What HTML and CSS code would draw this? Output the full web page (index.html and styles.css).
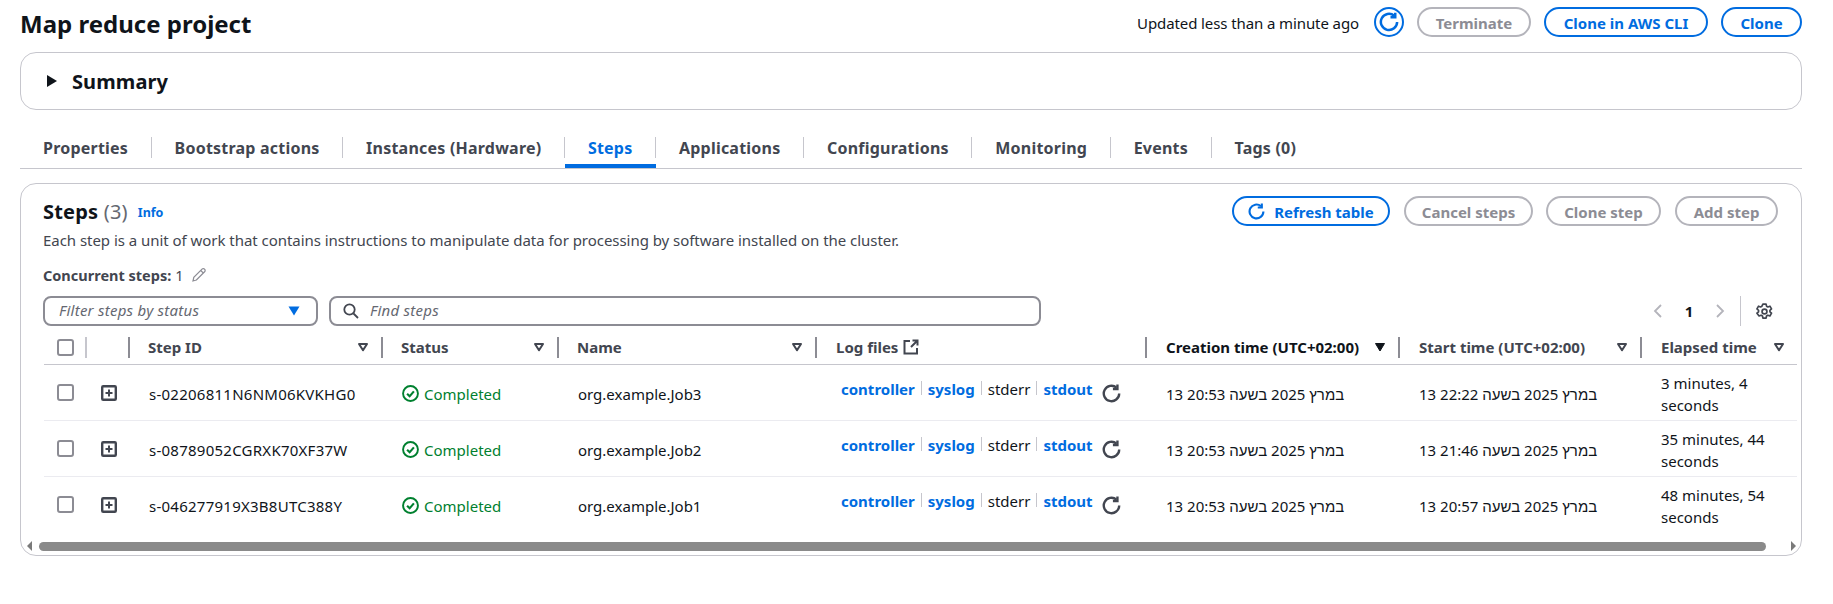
FILE: index.html
```html
<!DOCTYPE html>
<html lang="en">
<head>
<meta charset="utf-8">
<title>Map reduce project</title>
<link rel="stylesheet" href="styles.css">
</head>
<body>
<svg class="defs" width="0" height="0" aria-hidden="true">
  <symbol id="i-refresh" viewBox="0 0 16 16"><path d="M14.500 8a6.500 6.500 0 1 1-2.300-5" fill="none" stroke="currentColor" stroke-width="2"/><path d="M13 0.500V4.200H9.200" fill="none" stroke="currentColor" stroke-width="2"/></symbol>
  <symbol id="i-sort" viewBox="0 0 12 10"><path d="M2 2h8L6 8.200z" fill="none" stroke="currentColor" stroke-width="2" stroke-linejoin="round"/></symbol>
  <symbol id="i-sort-on" viewBox="0 0 12 10"><path d="M1.500 1.500h9L6 9z" fill="currentColor" stroke="currentColor" stroke-width="1" stroke-linejoin="round"/></symbol>
  <symbol id="i-expand" viewBox="0 0 16 16"><rect x="1.200" y="1.200" width="13.600" height="13.600" rx="1" fill="none" stroke="currentColor" stroke-width="2.400"/><path d="M8 4.500v7M4.500 8h7" fill="none" stroke="currentColor" stroke-width="2"/></symbol>
  <symbol id="i-check" viewBox="0 0 16 16"><circle cx="8" cy="8" r="7" fill="none" stroke="currentColor" stroke-width="1.800"/><path d="M4.800 8.200l2.400 2.400 4-4.600" fill="none" stroke="currentColor" stroke-width="2"/></symbol>
</svg>

<header class="page-head">
  <h1 class="page-title">Map reduce project</h1>
  <div class="page-actions">
    <span class="updated">Updated less than a minute ago</span>
    <button class="icon-btn"><svg class="icon-20"><use href="#i-refresh"/></svg></button>
    <button class="btn btn-off btn-terminate">Terminate</button>
    <button class="btn btn-on btn-cli">Clone in AWS CLI</button>
    <button class="btn btn-on btn-clone">Clone</button>
  </div>
</header>

<section class="summary">
  <svg class="summary-caret" viewBox="0 0 12 14"><path d="M1 1l10 6-10 6z" fill="currentColor"/></svg>
  <h2 class="summary-title">Summary</h2>
</section>

<nav class="tabs">
  <a class="tab"><span class="tab-label">Properties</span></a>
  <a class="tab"><span class="tab-label">Bootstrap actions</span></a>
  <a class="tab"><span class="tab-label">Instances (Hardware)</span></a>
  <a class="tab tab-active"><span class="tab-label">Steps</span></a>
  <a class="tab"><span class="tab-label">Applications</span></a>
  <a class="tab"><span class="tab-label">Configurations</span></a>
  <a class="tab"><span class="tab-label">Monitoring</span></a>
  <a class="tab"><span class="tab-label">Events</span></a>
  <a class="tab"><span class="tab-label tab-last">Tags (0)</span></a>
</nav>

<section class="panel">
  <div class="panel-top">
    <div class="panel-head">
      <div class="panel-heading">
        <h2 class="panel-title">Steps <span class="panel-count">(3)</span></h2>
        <a class="info">Info</a>
      </div>
      <div class="panel-actions">
        <button class="btn btn-on btn-refresh"><svg class="icon-17"><use href="#i-refresh"/></svg>Refresh table</button>
        <button class="btn btn-off btn-cancel">Cancel steps</button>
        <button class="btn btn-off btn-clonestep">Clone step</button>
        <button class="btn btn-off btn-add">Add step</button>
      </div>
    </div>
    <p class="panel-desc">Each step is a unit of work that contains instructions to manipulate data for processing by software installed on the cluster.</p>
    <p class="concurrent"><b>Concurrent steps:</b> 1
      <svg class="pencil" viewBox="0 0 16 16"><path d="M2 14l.800-3.600L11 2.200a1.800 1.800 0 0 1 2.600 0 1.800 1.800 0 0 1 0 2.600L5.400 13z M9.800 3.500l2.600 2.600" fill="none" stroke="currentColor" stroke-width="1.200"/></svg>
    </p>
    <div class="toolbar">
      <div class="filter"><span class="ph">Filter steps by status</span><svg class="filter-caret" viewBox="0 0 12 10"><path d="M.5 .5h11L6 9.500z" fill="currentColor"/></svg></div>
      <div class="search">
        <svg class="search-icon" viewBox="0 0 16 16"><circle cx="6.500" cy="6.500" r="5.200" fill="none" stroke="currentColor" stroke-width="1.800"/><path d="M10.500 10.500l4.500 4.500" fill="none" stroke="currentColor" stroke-width="1.800"/></svg>
        <span class="ph">Find steps</span>
      </div>
      <div class="pager">
        <svg class="chev" viewBox="0 0 10 16"><path d="M8 2L2 8l6 6" fill="none" stroke="currentColor" stroke-width="1.800"/></svg>
        <b class="page-num">1</b>
        <svg class="chev" viewBox="0 0 10 16"><path d="M2 2l6 6-6 6" fill="none" stroke="currentColor" stroke-width="1.800"/></svg>
        <span class="pager-sep"></span>
        <svg class="gear" viewBox="0 0 16 16"><path d="M6.500 1h3l.4 2 1.300.7 1.900-.7 1.500 2.600-1.500 1.300v1.400l1.500 1.300-1.500 2.600-1.900-.7-1.300.7-.4 2h-3l-.4-2-1.300-.7-1.900.7L.900 9.600l1.500-1.300V6.900L.900 5.600l1.500-2.600 1.900.7 1.300-.7z" fill="none" stroke="currentColor" stroke-width="1.600" stroke-linejoin="round"/><circle cx="8" cy="8" r="2.300" fill="none" stroke="currentColor" stroke-width="1.600"/></svg>
      </div>
    </div>
  </div>

  <table class="grid">
    <colgroup>
      <col class="c-sel"><col class="c-exp"><col class="c-id"><col class="c-status"><col class="c-name"><col class="c-log"><col class="c-create"><col class="c-start"><col class="c-elapsed">
    </colgroup>
    <thead>
      <tr>
        <th><div class="th th-sel"><span class="box"></span></div></th>
        <th><div class="th"></div></th>
        <th><div class="th">Step ID<svg class="sort"><use href="#i-sort"/></svg></div></th>
        <th><div class="th">Status<svg class="sort"><use href="#i-sort"/></svg></div></th>
        <th><div class="th">Name<svg class="sort"><use href="#i-sort"/></svg></div></th>
        <th><div class="th th-log th-wide">Log files<svg class="ext" viewBox="0 0 16 16"><path d="M7 2H1.500v12.500H14V9" fill="none" stroke="currentColor" stroke-width="2"/><path d="M9.500 1.500H14.500V6.500M14 2L8 8" fill="none" stroke="currentColor" stroke-width="2"/></svg></div></th>
        <th><div class="th th-on th-wide">Creation time (UTC+02:00)<svg class="sort"><use href="#i-sort-on"/></svg></div></th>
        <th><div class="th th-wide">Start time (UTC+02:00)<svg class="sort"><use href="#i-sort"/></svg></div></th>
        <th><div class="th th-end th-wide">Elapsed time<svg class="sort"><use href="#i-sort"/></svg></div></th>
      </tr>
    </thead>
    <tbody>
      <tr>
        <td class="td-sel"><span class="box"></span></td>
        <td class="td-exp"><svg class="expand"><use href="#i-expand"/></svg></td>
        <td class="td-id">s-02206811N6NM06KVKHG0</td>
        <td><span class="ok"><svg class="ok-icon"><use href="#i-check"/></svg>Completed</span></td>
        <td>org.example.Job3</td>
        <td class="td-log"><div class="logs"><a>controller</a><i></i><a>syslog</a><i></i><span>stderr</span><i></i><a>stdout</a><svg class="log-refresh"><use href="#i-refresh"/></svg></div></td>
        <td>13 במרץ 2025 בשעה 20:53</td>
        <td>13 במרץ 2025 בשעה 22:22</td>
        <td class="td-elapsed">3 minutes, 4 seconds</td>
      </tr>
      <tr>
        <td class="td-sel"><span class="box"></span></td>
        <td class="td-exp"><svg class="expand"><use href="#i-expand"/></svg></td>
        <td class="td-id">s-08789052CGRXK70XF37W</td>
        <td><span class="ok"><svg class="ok-icon"><use href="#i-check"/></svg>Completed</span></td>
        <td>org.example.Job2</td>
        <td class="td-log"><div class="logs"><a>controller</a><i></i><a>syslog</a><i></i><span>stderr</span><i></i><a>stdout</a><svg class="log-refresh"><use href="#i-refresh"/></svg></div></td>
        <td>13 במרץ 2025 בשעה 20:53</td>
        <td>13 במרץ 2025 בשעה 21:46</td>
        <td class="td-elapsed">35 minutes, 44 seconds</td>
      </tr>
      <tr class="row-last">
        <td class="td-sel"><span class="box"></span></td>
        <td class="td-exp"><svg class="expand"><use href="#i-expand"/></svg></td>
        <td class="td-id">s-046277919X3B8UTC388Y</td>
        <td><span class="ok"><svg class="ok-icon"><use href="#i-check"/></svg>Completed</span></td>
        <td>org.example.Job1</td>
        <td class="td-log"><div class="logs"><a>controller</a><i></i><a>syslog</a><i></i><span>stderr</span><i></i><a>stdout</a><svg class="log-refresh"><use href="#i-refresh"/></svg></div></td>
        <td>13 במרץ 2025 בשעה 20:53</td>
        <td>13 במרץ 2025 בשעה 20:57</td>
        <td class="td-elapsed">48 minutes, 54 seconds</td>
      </tr>
    </tbody>
  </table>

  <div class="hscroll">
    <span class="arrow arrow-l"></span>
    <span class="thumb"></span>
    <span class="arrow arrow-r"></span>
  </div>
</section>
</body>
</html>
```
FILE: styles.css
```css
* { box-sizing: border-box; }
html, body { margin: 0; padding: 0; background: #fff; }
body {
  padding: 7px 31px 0 20px;
  font-family: "Noto Sans", "Liberation Sans", "DejaVu Sans", sans-serif;
  font-size: 15px;
  line-height: 20px;
  color: #0f141a;
  overflow: hidden;
}
.defs { position: absolute; }
svg { display: block; flex: none; }
.icon-17 { width: 17px; height: 17px; }
.icon-20 { width: 20px; height: 20px; }

.page-head { display: flex; align-items: center; justify-content: space-between; height: 30px; }
.page-title { margin: 0; padding-top: 3px; font-size: 24px; line-height: 30px; font-weight: 700; }
.page-actions { display: flex; align-items: center; }
.updated { margin-right: 15px; padding-top: 2px; letter-spacing: -0.1px; }

.btn {
  display: flex; align-items: center; justify-content: center;
  height: 30px; padding: 1px 0 0; border: 2px solid; border-radius: 20px;
  background: #fff; font: 700 15px/20px "Noto Sans", "Liberation Sans", sans-serif;
}
.btn-on { color: #006ce0; border-color: #006ce0; }
.btn-off { color: #8c8c94; border-color: #b4b4bb; }
.icon-btn {
  display: flex; align-items: center; justify-content: center;
  width: 30px; height: 30px; padding: 0; margin-right: 13px;
  color: #006ce0; background: #fff; border: 2px solid #006ce0; border-radius: 50%;
}
.btn-terminate { width: 114px; margin-right: 13px; }
.btn-cli { width: 164px; margin-right: 13px; }
.btn-clone { width: 81px; }

.summary {
  display: flex; align-items: center; height: 58px; margin-top: 15px;
  padding-left: 25px; border: 1px solid #c6c6cd; border-radius: 16px;
}
.summary-caret { width: 12px; height: 14px; margin-right: 14px; }
.summary-title { margin: 0; padding-top: 2px; font-size: 20px; line-height: 24px; font-weight: 700; letter-spacing: .1px; }

.tabs { display: flex; margin-top: 27px; border-bottom: 1px solid #c6c6cd; }
.tab { display: block; padding-bottom: 6px; border-bottom: 4px solid transparent; }
.tab-label {
  display: block; height: 21px; padding: 0 22.500px 0 23px;
  border-right: 1px solid #c6c6cd;
  font-size: 16px; line-height: 23px; font-weight: 700; color: #424650; white-space: nowrap; letter-spacing: .22px;
}
.tab-last { border-right: 0; }
.tab-active { border-bottom-color: #006ce0; }
.tab-active .tab-label { color: #006ce0; }

.panel {
  width: 1782px; height: 373px; margin-top: 14px;
  border: 1px solid #c6c6cd; border-radius: 16px; padding-top: 12px; overflow: hidden;
}
.panel-top { padding: 0 23px 0 22px; }
.panel-head { display: flex; justify-content: space-between; height: 31px; }
.panel-heading { display: flex; align-items: center; }
.panel-title { margin: 0; padding-top: 1px; font-size: 20px; line-height: 24px; font-weight: 700; letter-spacing: .2px; }
.panel-count { font-weight: 400; color: #656871; }
.info { margin-left: 10px; padding-top: 3px; font-size: 12.500px; font-weight: 700; color: #006ce0; }
.panel-actions { display: flex; }
.btn-refresh { width: 158px; margin-right: 14px; gap: 9px; }
.btn-cancel { width: 129px; margin-right: 13px; }
.btn-clonestep { width: 115px; margin-right: 14px; }
.btn-add { width: 103px; }
.panel-desc { margin: 2px 0 0; line-height: 22px; color: #424650; letter-spacing: -0.04px; }
.concurrent { display: flex; align-items: center; gap: 4px; margin: 13px 0 0; line-height: 22px; font-size: 14.500px; color: #424650; }
.pencil { width: 16px; height: 16px; margin-left: 3px; color: #8c8c94; }

.toolbar { display: flex; align-items: center; margin-top: 10px; }
.filter, .search {
  display: flex; align-items: center; height: 30px;
  border: 2px solid #8c8c94; border-radius: 8px;
}
.filter { width: 275px; padding: 0 16px 0 14px; justify-content: space-between; }
.search { width: 712px; margin-left: 11px; padding-left: 12px; gap: 11px; }
.ph { padding-bottom: 2px; font-style: italic; color: #656871; letter-spacing: .25px; }
.filter-caret { width: 12px; height: 10px; color: #006ce0; }
.search-icon { width: 16px; height: 16px; color: #424650; }
.pager { display: flex; align-items: center; margin-left: auto; height: 30px; color: #b4b4bb; margin-right: 5px; }
.chev { width: 10px; height: 16px; }
.page-num { width: 52px; text-align: center; color: #0f141a; }
.pager-sep { width: 1px; height: 30px; margin: 0 15px 0 15px; background: #c6c6cd; }
.gear { width: 17px; height: 17px; color: #424650; }

.grid { width: 1753px; margin: 6px 0 0 23px; border-collapse: collapse; table-layout: fixed; }
.c-sel, .c-exp { width: 43px; }
.c-id, .c-create { width: 253px; }
.c-status { width: 176px; }
.c-name { width: 258px; }
.c-log { width: 330px; }
.c-start { width: 242px; }
.c-elapsed { width: 155px; }

th { padding: 5px 0 6px; border-bottom: 1px solid #c6c6cd; font-weight: 700; text-align: left; color: #424650; }
.th {
  display: flex; align-items: center; justify-content: space-between;
  height: 21px; padding: 0 12px 2px 18px; border-right: 2px solid #8c8c94; white-space: nowrap;
}
.th-sel { padding: 0 0 0 13px; border-right-color: #c6c6cd; justify-content: flex-start; }
.th-log { justify-content: flex-start; gap: 5px; }
.th-wide { padding-left: 19px; }
.th-on { color: #0f141a; }
.th-end { border-right: 0; }
.sort { width: 12px; height: 10px; margin-top: 1px; }
.ext { width: 16px; height: 16px; }

td { height: 56px; padding: 2px 6px 0 19px; border-bottom: 1px solid #ebebf0; vertical-align: middle; line-height: 22px; white-space: nowrap; }
.row-last td { border-bottom: 0; }
td.td-sel { padding: 0 0 0 13px; }
td.td-exp { padding: 1px 0 0 14px; }
td.td-id { letter-spacing: .25px; }
td.td-log { padding: 0 0 0 24px; }
td.td-elapsed { white-space: normal; padding-right: 12px; }
.box { display: block; width: 17px; height: 17px; border: 2px solid #8c8c94; border-radius: 3px; background: #fff; }
.expand { width: 16px; height: 16px; color: #424650; }
.ok { display: flex; align-items: center; gap: 5px; color: #00802f; }
.ok-icon { width: 17px; height: 17px; }
.logs { display: flex; align-items: center; }
.logs a { font-weight: 700; color: #006ce0; }
.logs a, .logs span { position: relative; top: -4px; }
.logs i { width: 1px; height: 14px; margin: 0 6px; background: #c6c6cd; position: relative; top: -5px; }
.log-refresh { width: 19px; height: 19px; margin: 2px 0 0 9px; color: #424650; }

.hscroll { display: flex; align-items: center; height: 13px; margin-top: 7px; }
.arrow { width: 0; height: 0; border-style: solid; border-color: transparent; }
.arrow-l { margin-left: 6px; border-width: 5px 5px 5px 0; border-right-color: #7a7a7a; }
.thumb { flex: 1; height: 9px; margin: 0 25px 0 7px; background: #8a8a8a; border-radius: 5px; }
.arrow-r { margin-right: 5px; border-width: 5px 0 5px 5px; border-left-color: #7a7a7a; }
```
